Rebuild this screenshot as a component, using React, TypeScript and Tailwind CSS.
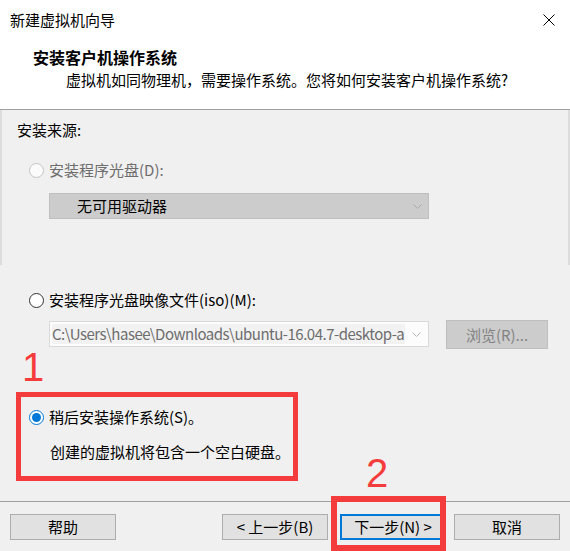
import React from 'react';

const font = { fontFamily: '"Noto Sans CJK SC", "Noto Sans", sans-serif' };

function Radio({ state }: { state: 'off' | 'disabled' | 'on' }) {
  if (state === 'on') {
    return (
      <span className="flex h-[15px] w-[15px] shrink-0 items-center justify-center rounded-full border border-[#0078d7] bg-white">
        <span className="block h-[9px] w-[9px] rounded-full bg-[#0078d7]" />
      </span>
    );
  }
  return (
    <span
      className={
        state === 'disabled'
          ? 'block h-[15px] w-[15px] shrink-0 rounded-full border border-[#c4c4c4] bg-[#fbfbfb]'
          : 'block h-[15px] w-[15px] shrink-0 rounded-full border border-[#333333] bg-white'
      }
    />
  );
}

function Chevron({ color }: { color: string }) {
  return (
    <svg width="9" height="5" viewBox="0 0 9 5" fill="none" className="shrink-0">
      <path d="M0.5 0.5 L4.5 4.5 L8.5 0.5" stroke={color} strokeWidth="1" />
    </svg>
  );
}

function Button({ label, primary }: { label: string; primary?: boolean }) {
  return (
    <div
      className={
        primary
          ? 'flex h-[26px] w-[106px] items-center justify-center border-2 border-[#0078d7] bg-[#e1e1e1] text-[15px] leading-[20px] text-black'
          : 'flex h-[26px] w-[106px] items-center justify-center border border-[#adadad] bg-[#e1e1e1] text-[15px] leading-[20px] text-black'
      }
    >
      {label}
    </div>
  );
}

export default function App() {
  return (
    <div className="relative h-[551px] w-[570px] overflow-hidden bg-[#f0f0f0] text-black" style={font}>
      {/* header */}
      <div className="h-[110px] border-b border-[#a0a0a0] bg-white">
        <div className="flex h-[40px] items-center justify-between pl-[10px] pr-[15px]">
          <span className="text-[15px] leading-[20px]">新建虚拟机向导</span>
          <svg width="12" height="12" viewBox="0 0 12 12">
            <path d="M0.5 0.5 L11.5 11.5 M11.5 0.5 L0.5 11.5" stroke="#000" strokeWidth="1" />
          </svg>
        </div>
        <div className="pl-[33px] pt-[7px] text-[16px] font-bold leading-[20px]">安装客户机操作系统</div>
        <div className="mt-[3px] pl-[66px] text-[15px] leading-[20px]">
          虚拟机如同物理机，需要操作系统。您将如何安装客户机操作系统?
        </div>
      </div>

      {/* source: disc */}
      <div className="h-[155px] border-x-2 border-[#dcdcdc] pl-[15px] pt-[10px]">
        <div className="text-[15px] leading-[20px]">安装来源:</div>
        <div className="mt-[20px] flex items-center gap-[5px] pl-[12px]">
          <Radio state="disabled" />
          <span className="text-[15px] leading-[20px] text-[#6d6d6d]">安装程序光盘(D):</span>
        </div>
        <div className="ml-[32px] mt-[13px] flex h-[26px] w-[380px] items-center justify-between border border-[#bfbfbf] bg-[#cccccc] pl-[27px] pr-[6px]">
          <span className="text-[15px] leading-[20px]">无可用驱动器</span>
          <Chevron color="#a8a8a8" />
        </div>
      </div>

      {/* source: iso / later */}
      <div className="h-[236px] pl-[29px] pt-[25px]">
        <div className="flex items-center gap-[5px]">
          <Radio state="off" />
          <span className="text-[15px] leading-[20px]">安装程序光盘映像文件(iso)(M):</span>
        </div>
        <div className="mt-[10px] flex items-start pl-[20px]">
          <div className="mt-[1px] flex h-[26px] w-[380px] items-center justify-between overflow-hidden border border-[#d9d9d9] bg-[#fcfcfc] pl-[2px] pr-[7px]">
            <span className="overflow-hidden whitespace-nowrap bg-[#f2f2f2] pr-[1px] text-[15px] leading-[20px] tracking-[-0.5px] text-[#6d6d6d]">
              C:\Users\hasee\Downloads\ubuntu-16.04.7-desktop-a
            </span>
            <Chevron color="#b5b5b5" />
          </div>
          <div className="ml-[17px] flex h-[29px] w-[102px] items-center justify-center border border-[#bfbfbf] bg-[#cccccc] text-[15px] leading-[20px] text-[#838383]">
            浏览(R)...
          </div>
        </div>
        <div className="mt-[58px] flex items-center gap-[5px]">
          <Radio state="on" />
          <span className="text-[15px] leading-[20px]">稍后安装操作系统(S)。</span>
        </div>
        <div className="mt-[15px] pl-[21px] text-[15px] leading-[20px]">创建的虚拟机将包含一个空白硬盘。</div>
      </div>

      {/* footer */}
      <div className="border-t border-[#a0a0a0]">
        <div className="flex px-[10px] pt-[12px]">
          <Button label="帮助" />
          <div className="ml-auto flex">
            <Button label="< 上一步(B)" />
            <div className="ml-[12px]">
              <Button label="下一步(N) >" primary />
            </div>
            <div className="ml-[8px]">
              <Button label="取消" />
            </div>
          </div>
        </div>
      </div>

      {/* annotations */}
      <div className="absolute left-[16px] top-[392px] h-[89px] w-[282px] border-[5px] border-[#f53c3c]" />
      <div className="absolute left-[331px] top-[496px] h-[55px] w-[115px] border-[6px] border-[#f53c3c]" />
      <span
        className="absolute left-[22px] top-[344px] text-[40px] leading-[46px] text-[#f53c3c]"
        style={{ fontFamily: '"Liberation Sans", Arial, sans-serif' }}
      >
        1
      </span>
      <span
        className="absolute left-[366px] top-[450px] text-[40px] leading-[46px] text-[#f53c3c]"
        style={{ fontFamily: '"Liberation Sans", Arial, sans-serif' }}
      >
        2
      </span>
    </div>
  );
}
